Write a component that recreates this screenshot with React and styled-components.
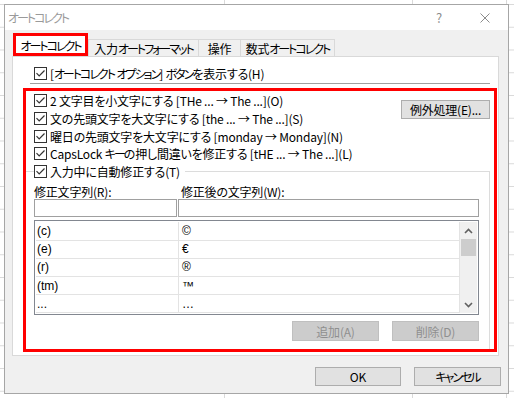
import React from "react";
import styled, { createGlobalStyle } from "styled-components";

const Global = createGlobalStyle`
  html, body { margin: 0; padding: 0; }
  body {
    font-family: "Noto Sans CJK JP", "Liberation Sans", sans-serif;
    font-size: 12px;
    color: #000;
    font-feature-settings: "palt";
    letter-spacing: -0.2px;
  }
  * { box-sizing: border-box; }
`;

const Kana = styled.span`
  letter-spacing: -2px;
`;

const KANA = /([\u30A0-\u30FF]+)/;
const fit = (text) =>
  text
    .split(KANA)
    .map((part, i) => (KANA.test(part) ? <Kana key={i}>{part}</Kana> : part));

const Desktop = styled.div`
  width: 514px;
  height: 398px;
  padding: 4px 0 0 4px;
  background-color: #fff;
  background-image:
    linear-gradient(to right, #dadada 1px, transparent 1px),
    linear-gradient(to bottom, #dadada 1px, transparent 1px);
  background-size: 94px 22.75px;
  background-position: 36px 4px;
  overflow: hidden;
`;

const Window = styled.div`
  width: 505px;
  height: 390px;
  border: 1px solid #a6a6a6;
  background: #f0f0f0;
  display: flex;
  flex-direction: column;
`;

const TitleBar = styled.div`
  height: 25px;
  background: #fff;
  display: flex;
  align-items: center;
  padding-left: 3px;
`;

const Title = styled.div`
  flex: 1;
  color: #9a9a9a;
`;

const CaptionButton = styled.div`
  width: 46px;
  height: 25px;
  display: flex;
  align-items: center;
  justify-content: center;
  color: #8c8c8c;
  font-size: 13px;
`;

const Body = styled.div`
  flex: 1;
  padding: 3px 7px 0 7px;
  display: flex;
  flex-direction: column;
`;

const TabStrip = styled.div`
  height: 23px;
  display: flex;
  align-items: flex-end;
  padding-left: 1px;
`;

const Tab = styled.div`
  width: ${(p) => p.$w}px;
  height: ${(p) => (p.$active ? 23 : 17)}px;
  margin-left: ${(p) => (p.$first ? 0 : -1)}px;
  display: flex;
  align-items: center;
  justify-content: center;
  white-space: nowrap;
  background: ${(p) => (p.$active ? "#fff" : "#f0f0f0")};
  border: ${(p) => (p.$active ? "3px solid #ff0000" : "1px solid #d9d9d9")};
  border-bottom: ${(p) => (p.$active ? "3px solid #ff0000" : "none")};
  padding-top: ${(p) => (p.$active ? 1 : 0)}px;
`;

const Panel = styled.div`
  height: 300px;
  margin-right: 2px;
  border: 1px solid #d9d9d9;
  background: #fff;
  padding-top: 7px;
  display: flex;
  flex-direction: column;
`;

const CheckRow = styled.div`
  display: flex;
  align-items: center;
  gap: 3px;
  height: ${(p) => p.$h || 17.7}px;
  padding-left: ${(p) => p.$indent || 0}px;
  white-space: nowrap;
`;

const Separator = styled.div`
  height: 1px;
  background: #a0a0a0;
  margin: 1px 8px 4px 17px;
`;

const Highlight = styled.div`
  height: 264px;
  margin: 0 1px 0 10px;
  border: 3px solid #ff0000;
  display: flex;
  flex-direction: column;
`;

const Options = styled.div`
  display: flex;
  padding: 1px 4px 0 8px;
`;

const OptionList = styled.div`
  flex: 1;
  display: flex;
  flex-direction: column;
`;

const Button = styled.div`
  width: ${(p) => p.$w}px;
  height: ${(p) => p.$h || 19}px;
  background: ${(p) => (p.$disabled ? "#cccccc" : "#e1e1e1")};
  border: 1px solid ${(p) => (p.$disabled ? "#bfbfbf" : "#adadad")};
  color: ${(p) => (p.$disabled ? "#8f8f8f" : "#000")};
  display: flex;
  align-items: center;
  justify-content: center;
  white-space: nowrap;
  margin-top: ${(p) => p.$mt || 0}px;
`;

const GroupBox = styled.fieldset`
  flex: 1;
  margin: 0 4px 0 0;
  padding: 0 0 0 8px;
  border: none;
  border-top: 1px solid #dcdcdc;
  border-right: 1px solid #dcdcdc;
  min-width: 0;
  display: flex;
  flex-direction: column;
`;

const GroupLegend = styled.legend`
  padding: 0 5px 0 0;
  margin-left: 0;
`;

const FieldGrid = styled.div`
  display: grid;
  grid-template-columns: 143px 301px;
  column-gap: 1px;
  grid-template-rows: 16px 18px;
  margin-top: 3px;
`;

const FieldLabel = styled.div`
  display: flex;
  align-items: center;
  padding-left: ${(p) => p.$offset || 0}px;
`;

const TextBox = styled.div`
  border: 1px solid #a0a0a0;
  background: #fff;
`;

const ListBox = styled.div`
  width: 445px;
  height: 95px;
  margin-top: 3px;
  border: 1px solid #828790;
  padding: 1px;
  display: flex;
  background: #fff;
`;

const Rows = styled.div`
  flex: 1;
  display: flex;
  flex-direction: column;
`;

const Row = styled.div`
  height: 18.2px;
  display: grid;
  grid-template-columns: 143px 1fr;
  border-bottom: 1px solid #e3e3e3;
`;

const Cell = styled.div`
  display: flex;
  align-items: center;
  padding-left: ${(p) => p.$pl}px;
  border-right: 1px solid #e3e3e3;
  font-family: "Liberation Sans", "Noto Sans CJK JP", sans-serif;
  font-size: 12px;
  letter-spacing: 0;
`;

const ScrollBar = styled.div`
  width: 17px;
  background: #f0f0f0;
  display: flex;
  flex-direction: column;
`;

const ScrollArrow = styled.div`
  height: 17px;
  display: flex;
  align-items: center;
  justify-content: center;
`;

const Thumb = styled.div`
  height: 17px;
  margin: 0 1px;
  background: #cdcdcd;
`;

const Track = styled.div`
  flex: 1;
`;

const ButtonRow = styled.div`
  display: flex;
  justify-content: flex-end;
  gap: ${(p) => p.$gap}px;
  margin-top: ${(p) => p.$mt}px;
  padding-right: ${(p) => p.$pr || 0}px;
`;

const Check = () => (
  <svg width="13" height="13" viewBox="0 0 13 13">
    <rect x="0.5" y="0.5" width="12" height="12" fill="#fff" stroke="#333" />
    <path d="M2.5 6.2 L5.2 9 L10.5 3.5" fill="none" stroke="#333" strokeWidth="1.2" />
  </svg>
);

const Chevron = ({ up }) => (
  <svg width="9" height="6" viewBox="0 0 9 6">
    <path
      d={up ? "M1 5 L4.5 1.5 L8 5" : "M1 1 L4.5 4.5 L8 1"}
      fill="none"
      stroke="#606060"
      strokeWidth="1.6"
    />
  </svg>
);

const CloseIcon = () => (
  <svg width="10" height="10" viewBox="0 0 10 10">
    <path d="M0.5 0.5 L9.5 9.5 M9.5 0.5 L0.5 9.5" stroke="#8c8c8c" strokeWidth="1" />
  </svg>
);

const options = [
  "2 文字目を小文字にする [THe ... → The ...](O)",
  "文の先頭文字を大文字にする [the ... → The ...](S)",
  "曜日の先頭文字を大文字にする [monday → Monday](N)",
  "CapsLock キーの押し間違いを修正する [tHE ... → The ...](L)",
];

const entries = [
  ["(c)", "©"],
  ["(e)", "€"],
  ["(r)", "®"],
  ["(tm)", "™"],
  ["...", "…"],
];

export default function App() {
  return (
    <>
      <Global />
      <Desktop>
        <Window>
          <TitleBar>
            <Title>{fit("オートコレクト")}</Title>
            <CaptionButton>?</CaptionButton>
            <CaptionButton>
              <CloseIcon />
            </CaptionButton>
          </TitleBar>
          <Body>
            <TabStrip>
              <Tab $w={75} $active $first>
                {fit("オートコレクト")}
              </Tab>
              <Tab $w={111} $first>
                {fit("入力オートフォーマット")}
              </Tab>
              <Tab $w={43}>操作</Tab>
              <Tab $w={95}>{fit("数式オートコレクト")}</Tab>
            </TabStrip>
            <Panel>
              <CheckRow $h={18} $indent={21}>
                <Check />
                <span>{fit("[オートコレクト オプション] ボタンを表示する(H)")}</span>
              </CheckRow>
              <Separator />
              <Highlight>
                <Options>
                  <OptionList>
                    {options.map((o) => (
                      <CheckRow key={o}>
                        <Check />
                        <span>{fit(o)}</span>
                      </CheckRow>
                    ))}
                  </OptionList>
                  <Button $w={89} $mt={8}>
                    例外処理(E)...
                  </Button>
                </Options>
                <GroupBox>
                  <GroupLegend>
                    <CheckRow>
                      <Check />
                      入力中に自動修正する(T)
                    </CheckRow>
                  </GroupLegend>
                  <FieldGrid>
                    <FieldLabel>修正文字列(R):</FieldLabel>
                    <FieldLabel $offset={3}>修正後の文字列(W):</FieldLabel>
                    <TextBox />
                    <TextBox />
                  </FieldGrid>
                  <ListBox>
                    <Rows>
                      {entries.map(([a, b]) => (
                        <Row key={a}>
                          <Cell $pl={1}>{a}</Cell>
                          <Cell $pl={3}>{b}</Cell>
                        </Row>
                      ))}
                    </Rows>
                    <ScrollBar>
                      <ScrollArrow>
                        <Chevron up />
                      </ScrollArrow>
                      <Thumb />
                      <Track />
                      <ScrollArrow>
                        <Chevron />
                      </ScrollArrow>
                    </ScrollBar>
                  </ListBox>
                  <ButtonRow $gap={13} $mt={6} $pr={10}>
                    <Button $w={87} $h={20} $disabled>
                      追加(A)
                    </Button>
                    <Button $w={87} $h={20} $disabled>
                      削除(D)
                    </Button>
                  </ButtonRow>
                </GroupBox>
              </Highlight>
            </Panel>
            <ButtonRow $gap={13} $mt={11}>
              <Button $w={86}>OK</Button>
              <Button $w={87}>{fit("キャンセル")}</Button>
            </ButtonRow>
          </Body>
        </Window>
      </Desktop>
    </>
  );
}
